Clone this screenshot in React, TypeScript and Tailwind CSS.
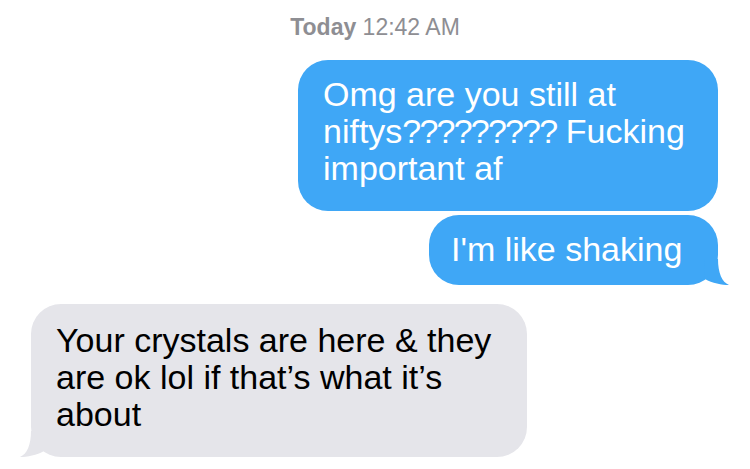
import React from "react";

const font = { fontFamily: '"Liberation Sans", Arial, sans-serif' };

function BlueTail() {
  return (
    <svg
      className="absolute right-[-12px] bottom-0"
      width="26"
      height="26"
      viewBox="0 0 26 26"
    >
      <path d="M0 0 L14 0 C14 14 18 23 25 26 C18 26 8 24 1 20 Z" fill="#3fa7f6" />
    </svg>
  );
}

function GrayTail() {
  return (
    <svg
      className="absolute left-[-12px] bottom-0"
      width="26"
      height="26"
      viewBox="0 0 26 26"
    >
      <path d="M26 0 L12 0 C12 14 8 23 1 26 C8 26 18 24 25 20 Z" fill="#e5e5ea" />
    </svg>
  );
}

export default function App() {
  return (
    <div
      className="w-[750px] h-[469px] bg-white flex flex-col overflow-hidden"
      style={font}
    >
      <div className="mt-[14px] h-[26px] leading-[26px] text-[23px] text-center text-[#8e8e93]">
        <span className="font-bold">Today</span> 12:42 AM
      </div>

      <div className="flex justify-end pr-[32px] mt-[20px]">
        <div className="relative w-[420px] h-[151px] rounded-[30px] bg-[#3fa7f6] pl-[25px] pt-[16px] text-white text-[34px] leading-[37px] whitespace-nowrap">
          Omg are you still at
          <br />
          niftys<span className="tracking-[-1.8px]">?????????</span> Fucking
          <br />
          important af
        </div>
      </div>

      <div className="flex justify-end pr-[32px] mt-[4px]">
        <div className="relative w-[289px] h-[70px] rounded-[30px] bg-[#3fa7f6] pl-[22px] pt-[16px] text-white text-[34px] leading-[37px] whitespace-nowrap">
          I'm like shaking
          <BlueTail />
        </div>
      </div>

      <div className="flex justify-start pl-[31px] mt-[19px]">
        <div className="relative w-[496px] h-[153px] rounded-[30px] bg-[#e5e5ea] pl-[25px] pt-[18px] text-black text-[34px] leading-[37px] whitespace-nowrap">
          <GrayTail />
          <span className="relative">
            Your crystals are here &amp; they
            <br />
            are ok lol if that’s what it’s
            <br />
            about
          </span>
        </div>
      </div>
    </div>
  );
}
